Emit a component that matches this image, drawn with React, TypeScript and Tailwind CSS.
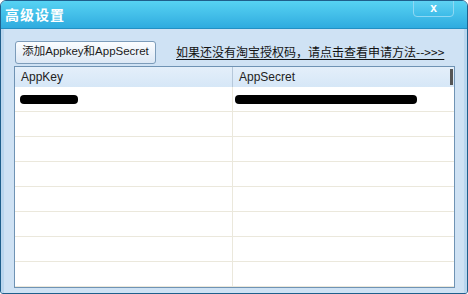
import React from "react";

const rows = [0, 1, 2, 3, 4, 5, 6, 7];

function Scribble({ width }: { width: number }) {
  return (
    <div className="flex items-center h-full">
      <div className="h-[9px] bg-black rounded-[4px]" style={{ width }} />
    </div>
  );
}

export default function App() {
  return (
    <div className="w-[468px] h-[294px] bg-white font-['Liberation_Sans','Noto_Sans_CJK_SC',sans-serif]">
      <div className="w-full h-full flex flex-col border border-[#1f5f8c] rounded-t-[6px] rounded-b-[3px] overflow-hidden bg-[#cfe2f4]">
        {/* title bar */}
        <div className="h-[28px] shrink-0 flex items-center justify-between bg-gradient-to-b from-[#56d3f3] to-[#2fabdf] border-b border-[#2390c4] relative">
          <span className="pl-[4px] text-[14px] font-bold text-white tracking-[1px] font-['Noto_Sans_CJK_SC',sans-serif]">
            高级设置
          </span>
          <div className="absolute right-[13px] top-[-1px] w-[41px] h-[17px] rounded-b-[4px] border border-[#8fd8f3] bg-gradient-to-b from-[#5fd2f2] to-[#3dbbe8] flex items-center justify-center">
            <span className="text-white text-[12px] font-bold leading-none -mt-[2px]">x</span>
          </div>
        </div>

        {/* body */}
        <div className="flex-1 flex flex-col pl-[10px] pr-[9px] pt-[11px] pb-[9px] border-x-[3px] border-b-[3px] border-[#bad6ee]">
          <div className="flex items-center h-[24px]">
            <button className="h-[23px] w-[141px] ml-[1px] rounded-[3px] border border-[#7c9cba] bg-gradient-to-b from-[#fbfdff] to-[#dce8f5] text-[11.5px] text-[#1a1a1a] leading-none">
              添加Appkey和AppSecret
            </button>
            <span className="ml-[20px] text-[12px] text-[#111] underline underline-offset-[2px] font-['Noto_Sans_CJK_SC',sans-serif]">
              如果还没有淘宝授权码，请点击查看申请方法--&gt;&gt;&gt;
            </span>
          </div>

          <div className="mt-[2px] flex-1 border border-[#6f93b4] bg-white flex flex-col overflow-hidden">
            <div className="h-[20px] shrink-0 flex bg-gradient-to-b from-[#e4effa] to-[#d6e7f7] text-[12px] text-[#222]">
              <div className="w-[218px] border-r border-[#b6c8da] pl-[6px] flex items-center">AppKey</div>
              <div className="flex-1 pl-[6px] flex items-center">AppSecret</div>
              <div className="w-[3px] my-[2px] mr-[1px] bg-[#555]" />
            </div>
            {rows.map((r) => (
              <div key={r} className="h-[25px] shrink-0 flex border-b border-[#ebe8dc]">
                <div className="w-[218px] border-r border-[#ebe8dc] pl-[5px]">
                  {r === 0 && <Scribble width={58} />}
                </div>
                <div className="flex-1 pl-[2px]">
                  {r === 0 && <Scribble width={182} />}
                </div>
              </div>
            ))}
          </div>
        </div>
      </div>
    </div>
  );
}
